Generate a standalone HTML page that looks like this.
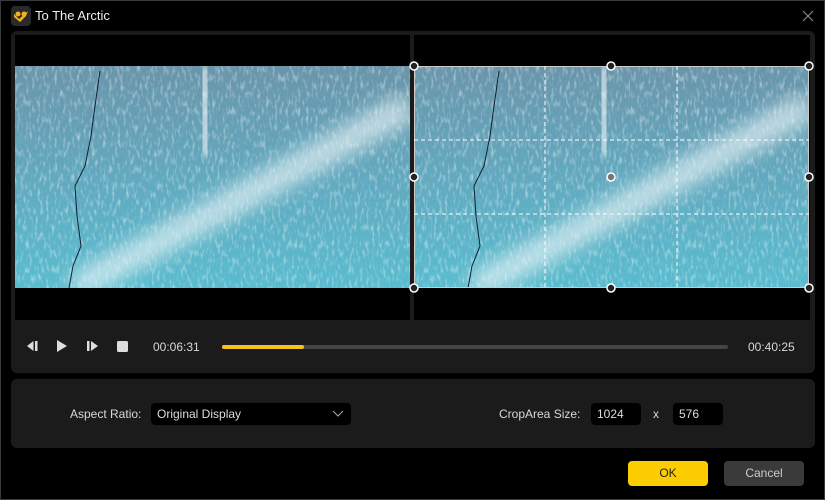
<!DOCTYPE html>
<html><head><style>
*{margin:0;padding:0;box-sizing:border-box}
body{width:825px;height:500px;background:#000;font-family:"Liberation Sans",sans-serif;position:relative;overflow:hidden;color:#ddd}
.win{position:absolute;inset:0;border:1px solid #3a3a3a}
.abs{position:absolute}
.panel{position:absolute;background:#1b1b1b;border-radius:6px}
.vid{position:absolute;background:#000}
.txt{position:absolute;font-size:12px;color:#d8d8d8;white-space:nowrap}
.inp{position:absolute;background:#000;border-radius:4px;font-size:12px;color:#ddd;padding-left:6px;line-height:22px}
</style></head><body>
<div class="win"></div>
<div class="abs" style="left:11px;top:6px;width:20px;height:20px;background:#2a2a2a;border-radius:4px"></div>
<svg class="abs" style="left:13px;top:9px" width="16" height="14" viewBox="0 0 16 14"><path d="M1 5 L6 10 L15 2 L13 7 L7 13 L1 8Z" fill="#f2b21d"/><circle cx="5" cy="5" r="2.5" fill="#f2b21d"/><circle cx="11" cy="5" r="2.5" fill="#f2b21d"/></svg>
<div class="txt" style="left:35px;top:8px;font-size:13px;color:#eee">To The Arctic</div>
<svg class="abs" style="left:802px;top:10px" width="12" height="12"><path d="M1 1L11 11M11 1L1 11" stroke="#888" stroke-width="1.2"/></svg>

<div class="panel" style="left:11px;top:31px;width:804px;height:342px"></div>
<svg width="0" height="0" style="position:absolute">
<defs>
<linearGradient id="bg" x1="0" y1="0" x2="0" y2="1"><stop offset="0" stop-color="#6a95ab"/><stop offset="0.5" stop-color="#62a9bf"/><stop offset="1" stop-color="#5abccf"/></linearGradient>
<filter id="bl"><feGaussianBlur stdDeviation="9"/></filter>
<filter id="bl2"><feGaussianBlur stdDeviation="4"/></filter>
<filter id="noise" x="0" y="0" width="100%" height="100%"><feTurbulence type="fractalNoise" baseFrequency="0.35 0.12" numOctaves="2" seed="3"/><feColorMatrix values="0 0 0 0 1  0 0 0 0 1  0 0 0 0 1  0 0 0 2.2 -1.1"/></filter>
<clipPath id="cp"><rect width="395" height="222"/></clipPath>
</defs></svg>
<div class="vid" style="left:15px;top:35px;width:395px;height:285px"></div>
<div class="vid" style="left:414px;top:35px;width:396px;height:285px"></div>
<svg class="abs" style="left:15px;top:66px" width="395" height="222" viewBox="0 0 395 222">
<g clip-path="url(#cp)">
<rect width="395" height="222" fill="url(#bg)"/>
<rect width="395" height="222" filter="url(#noise)" opacity="0.55"/>
<path d="M60 222 L395 40" stroke="#e6f2f5" stroke-width="28" opacity="0.7" filter="url(#bl)"/>
<path d="M188 0 L192 90" stroke="#fff" stroke-width="16" opacity="0.55" filter="url(#bl2)"/>
<path d="M85 5 L80 40 L76 70 L70 100 L60 120 L62 150 L66 180 L58 200 L54 222" stroke="#123" stroke-width="1" fill="none"/>
</g>
</svg>
<svg class="abs" style="left:414px;top:66px;overflow:visible" width="395" height="222" viewBox="0 0 395 222">
<g clip-path="url(#cp)">
<rect width="395" height="222" fill="url(#bg)"/>
<rect width="395" height="222" filter="url(#noise)" opacity="0.55"/>
<path d="M60 222 L395 40" stroke="#e6f2f5" stroke-width="28" opacity="0.7" filter="url(#bl)"/>
<path d="M188 0 L192 90" stroke="#fff" stroke-width="16" opacity="0.55" filter="url(#bl2)"/>
<path d="M85 5 L80 40 L76 70 L70 100 L60 120 L62 150 L66 180 L58 200 L54 222" stroke="#123" stroke-width="1" fill="none"/>
</g>
<rect x="0.5" y="0.5" width="394" height="221" fill="none" stroke="#ccc" stroke-width="1"/>
<g stroke="#fff" stroke-dasharray="4 3" stroke-width="1"><path d="M131 0V222M263 0V222M0 74H395M0 148H395"/></g>
<g fill="none" stroke="#fff" stroke-width="1.5"><circle cx="197" cy="0" r="4" fill="#222"/><circle cx="197" cy="111" r="4" fill="#777"/><circle cx="197" cy="222" r="4" fill="#222"/><circle cx="0" cy="0" r="4" fill="#222"/><circle cx="395" cy="0" r="4" fill="#222"/><circle cx="0" cy="111" r="4" fill="#222"/><circle cx="395" cy="111" r="4" fill="#222"/><circle cx="0" cy="222" r="4" fill="#222"/><circle cx="395" cy="222" r="4" fill="#222"/></g>
</svg>

<svg class="abs" style="left:26px;top:339px" width="110" height="14" viewBox="0 0 110 14">
<path d="M9 2h2.5v10H9zM7.5 2 L1 7 L7.5 12Z" fill="#ddd"/>
<path d="M31 1 L41 7 L31 13Z" fill="#ddd"/>
<path d="M61 2h2.5v10H61zM65 2 L72 7 L65 12Z" fill="#ddd"/>
<rect x="91" y="2" width="11" height="11" rx="1.5" fill="#ddd"/>
</svg>
<div class="txt" style="left:153px;top:340px">00:06:31</div>
<div class="abs" style="left:222px;top:345px;width:506px;height:4px;background:#444;border-radius:2px"></div>
<div class="abs" style="left:222px;top:345px;width:82px;height:4px;background:#f6c21c;border-radius:2px"></div>
<div class="txt" style="left:748px;top:340px">00:40:25</div>

<div class="panel" style="left:11px;top:379px;width:804px;height:69px"></div>
<div class="txt" style="left:70px;top:407px">Aspect Ratio:</div>
<div class="inp" style="left:151px;top:403px;width:200px">Original Display</div>
<svg class="abs" style="left:332px;top:410px" width="12" height="8"><path d="M1 1L6 6L11 1" stroke="#aaa" fill="none"/></svg>
<div class="txt" style="left:499px;top:407px">CropArea Size:</div>
<div class="inp" style="left:591px;top:403px;width:50px">1024</div>
<div class="txt" style="left:653px;top:407px">x</div>
<div class="inp" style="left:673px;top:403px;width:50px">576</div>

<div class="abs" style="left:628px;top:461px;width:80px;height:25px;background:#fccd00;border-radius:4px;color:#222;font-size:12px;text-align:center;line-height:25px">OK</div>
<div class="abs" style="left:724px;top:461px;width:80px;height:25px;background:#3a3a3a;border-radius:4px;color:#ccc;font-size:12px;text-align:center;line-height:25px">Cancel</div>
</body></html>
